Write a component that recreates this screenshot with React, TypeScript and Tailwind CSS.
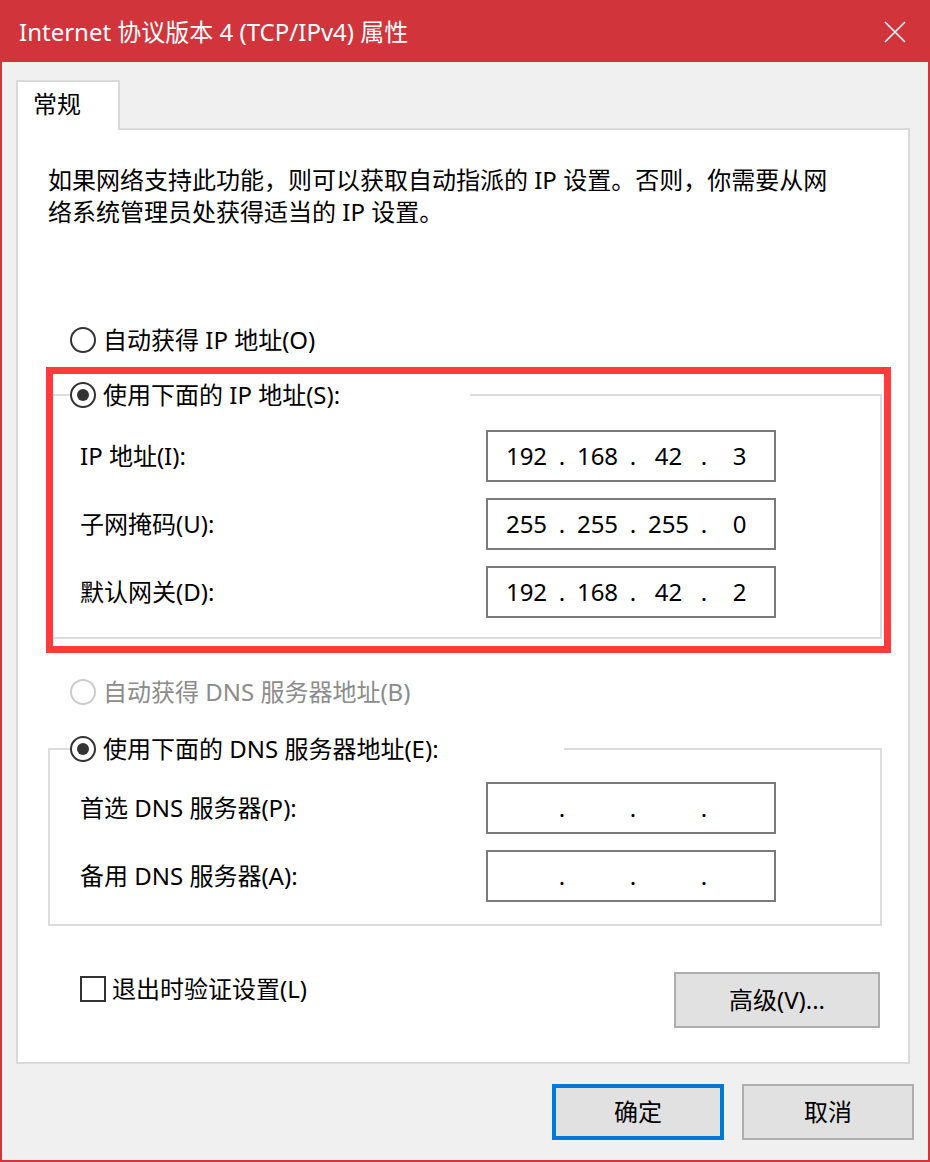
import React from 'react';

const font = { fontFamily: '"Noto Sans", "Noto Sans CJK SC", sans-serif' };

const Radio = ({ checked = false, disabled = false }: { checked?: boolean; disabled?: boolean }) => (
  <span
    className={`flex h-[26px] w-[26px] shrink-0 items-center justify-center rounded-full border-2 bg-white ${
      disabled ? 'border-[#cccccc]' : 'border-[#333333]'
    }`}
  >
    {checked && <span className="h-[12px] w-[12px] rounded-full bg-[#333333]" />}
  </span>
);

const IpBox = ({ parts }: { parts: string[] }) => (
  <div className="flex h-[52px] w-[290px] items-center border-2 border-[#7a7a7a] bg-white pl-[10px]">
    {parts.map((p, i) => (
      <React.Fragment key={i}>
        <span className="w-[57px] text-center">{p}</span>
        {i < 3 && <span className="w-[14px] text-center">.</span>}
      </React.Fragment>
    ))}
  </div>
);

const FieldRow = ({ label, parts }: { label: string; parts: string[] }) => (
  <div className="flex h-[52px] items-center">
    <span className="w-[406px]">{label}</span>
    <IpBox parts={parts} />
  </div>
);

const App = () => {
  return (
    <div
      className="flex h-[1162px] w-[930px] flex-col border-2 border-[#d1343a] bg-[#f0f0f0] text-[24px] leading-[32px] text-black"
      style={font}
    >
      {/* Title bar */}
      <div className="flex h-[60px] shrink-0 items-center justify-between bg-[#d1343a] pl-[17px] pr-[22px] text-white">
        <span className="text-[24px]">Internet 协议版本 4 (TCP/IPv4) 属性</span>
        <svg width="22" height="22" viewBox="0 0 22 22" fill="none" stroke="white" strokeWidth="1.6">
          <path d="M1 1 L21 21 M21 1 L1 21" />
        </svg>
      </div>

      {/* Tabs + panel */}
      <div className="ml-[14px] mr-[18px] mt-[18px] flex flex-col">
        <div className="relative z-10 -mb-[2px] h-[50px] w-[104px] border-2 border-b-0 border-[#d9d9d9] bg-white pl-[15px] pt-[6px]">
          常规
        </div>
        <div className="relative h-[936px] border-2 border-[#d9d9d9] bg-white pl-[30px] pr-[26px] pt-[34px]">
          <p className="w-[800px]">
            如果网络支持此功能，则可以获取自动指派的 IP 设置。否则，你需要从网络系统管理员处获得适当的 IP 设置。
          </p>

          <div className="mt-[96px] ml-[22px] flex h-[32px] items-center gap-[7px]">
            <Radio />
            <span>自动获得 IP 地址(O)</span>
          </div>

          <fieldset className="mt-[23px] border-2 border-[#dcdcdc] pb-[19px]">
            <legend className="ml-[20px] flex h-[32px] w-[400px] items-center gap-[7px] bg-white">
              <Radio checked />
              <span>使用下面的 IP 地址(S):</span>
            </legend>
            <div className="flex flex-col gap-[16px] pl-[30px] pt-[19px]">
              <FieldRow label="IP 地址(I):" parts={['192', '168', '42', '3']} />
              <FieldRow label="子网掩码(U):" parts={['255', '255', '255', '0']} />
              <FieldRow label="默认网关(D):" parts={['192', '168', '42', '2']} />
            </div>
          </fieldset>

          <div className="mt-[37px] ml-[22px] flex h-[32px] items-center gap-[7px] text-[#8c8c8c]">
            <Radio disabled />
            <span>自动获得 DNS 服务器地址(B)</span>
          </div>

          <fieldset className="mt-[25px] border-2 border-[#dcdcdc] pb-[22px]">
            <legend className="ml-[20px] flex h-[32px] w-[494px] items-center gap-[7px] bg-white">
              <Radio checked />
              <span>使用下面的 DNS 服务器地址(E):</span>
            </legend>
            <div className="flex flex-col gap-[16px] pl-[30px] pt-[17px]">
              <FieldRow label="首选 DNS 服务器(P):" parts={['', '', '', '']} />
              <FieldRow label="备用 DNS 服务器(A):" parts={['', '', '', '']} />
            </div>
          </fieldset>

          <div className="mt-[46px] flex items-start justify-between">
            <div className="ml-[32px] mt-[1px] flex h-[32px] items-center gap-[6px]">
              <span className="h-[26px] w-[26px] border-2 border-[#333333] bg-white" />
              <span>退出时验证设置(L)</span>
            </div>
            <button className="mr-[2px] h-[56px] w-[206px] border-2 border-[#adadad] bg-[#e1e1e1]">
              高级(V)...
            </button>
          </div>

          {/* annotation highlight */}
          <div className="pointer-events-none absolute left-[28px] top-[237px] h-[286px] w-[845px] border-[7px] border-[#fc3b3b]" />
        </div>
      </div>

      {/* Footer buttons */}
      <div className="mr-[14px] mt-[20px] flex justify-end gap-[18px]">
        <button className="h-[56px] w-[172px] border-4 border-[#0078d7] bg-[#e1e1e1]">确定</button>
        <button className="h-[56px] w-[172px] border-2 border-[#adadad] bg-[#e1e1e1]">取消</button>
      </div>
    </div>
  );
};

export default App;
